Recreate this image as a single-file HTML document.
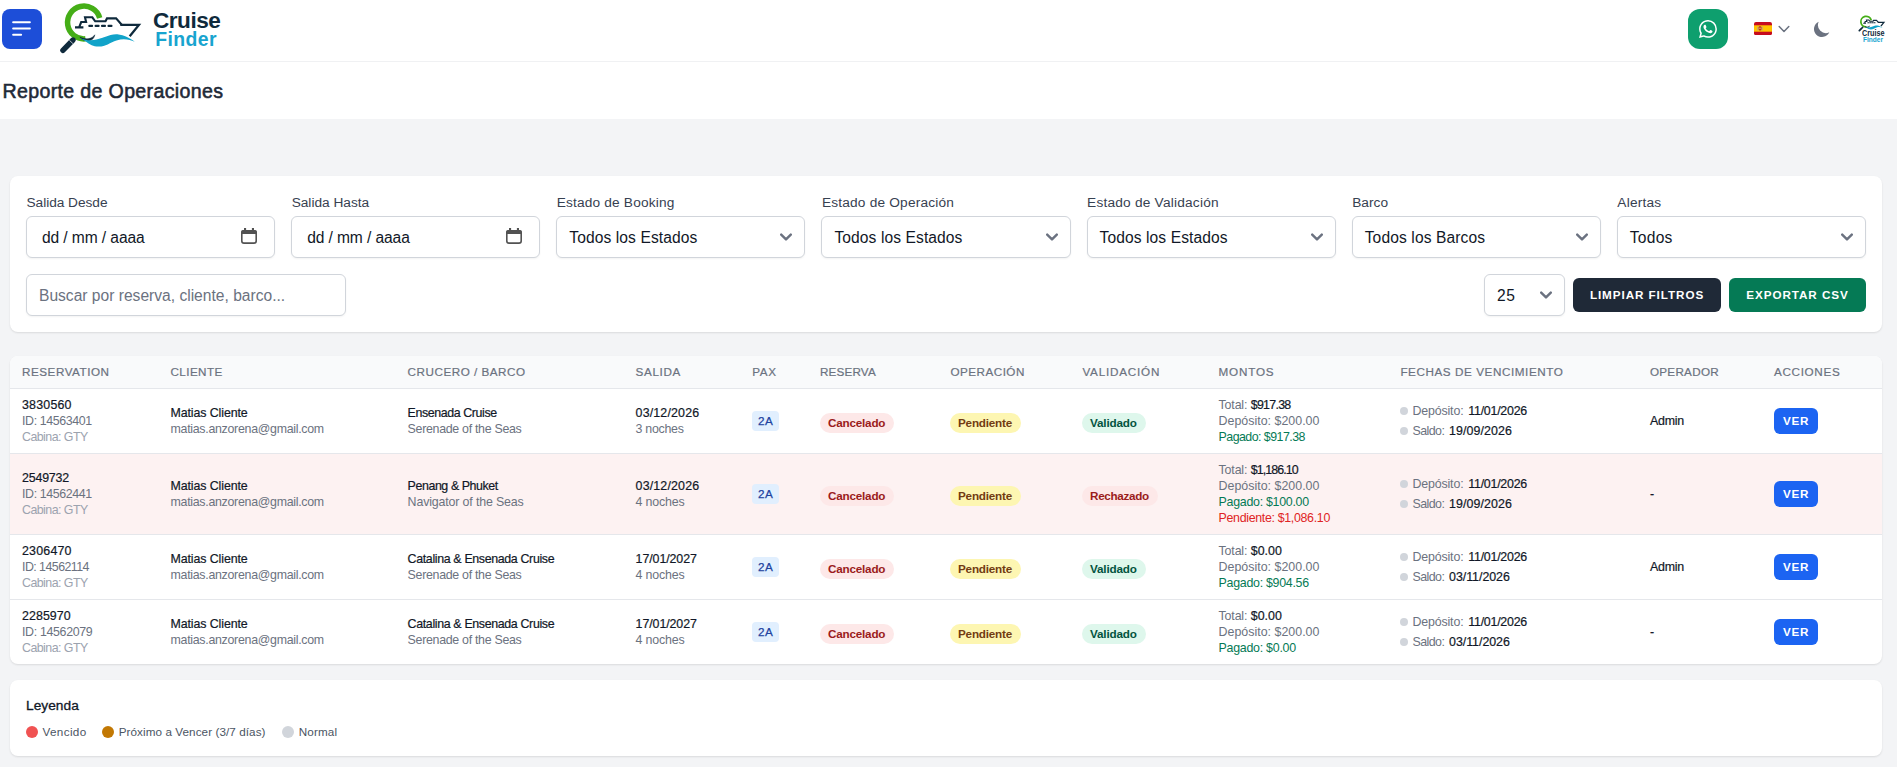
<!DOCTYPE html>
<html lang="es"><head><meta charset="utf-8"><title>Reporte de Operaciones</title>
<style>
*{box-sizing:border-box;margin:0;padding:0}
html,body{width:1897px;height:767px;overflow:hidden}
body{font-family:"Liberation Sans",sans-serif;background:#f3f4f6;color:#111827;position:relative;-webkit-font-smoothing:antialiased}
span{white-space:pre}
.top{position:absolute;left:0;top:0;width:1897px;height:62px;background:#fff;border-bottom:1px solid #f0f1f3}
.titlebar{position:absolute;left:0;top:62px;width:1897px;height:57px;background:#fff}
.titlebar h2{font-size:19.6px;position:absolute;left:2.5px;top:15px;line-height:28px;font-weight:400;color:#1f2937;-webkit-text-stroke:0.55px #1f2937}
.menu{position:absolute;left:2px;top:9px;width:40px;height:40px;border-radius:8px;background:#1d4ed8}
.menu svg{position:absolute;left:7px;top:7px}
.abs{position:absolute}
.wa{position:absolute;left:1688px;top:9px;width:40px;height:40px;border-radius:12px;background:#0e9f6e}
.wa svg{position:absolute;left:11px;top:11px}
.card{position:absolute;left:10px;width:1872px;background:#fff;border-radius:8px;box-shadow:0 1px 2px rgba(0,0,0,.07),0 1px 3px rgba(0,0,0,.04)}
.filters{top:176px;height:156px}
.fl{font-size:13.7px;position:absolute;top:17px;line-height:20px;color:#374151}
.fi{font-size:15.6px;position:absolute;height:42px;border:1px solid #d1d5db;border-radius:6px;background:#fff;box-shadow:0 1px 2px rgba(0,0,0,.05);line-height:40px;color:#111827}
.fi .tx{position:absolute;top:1px;left:12px}
.fi svg.chev{position:absolute;right:12px;top:16px}
.fi svg.cal{position:absolute;right:17px;top:11px}
.btn{font-size:11.7px;position:absolute;top:102px;height:34px;border-radius:6px;color:#fff;line-height:34px;text-align:center}
.tablecard{top:356px;height:308px;overflow:hidden}
table{border-collapse:separate;border-spacing:0;table-layout:fixed;width:1872px}
th{font-size:11.7px;height:33px;background:#f9fafb;border-bottom:1px solid #e5e7eb;text-align:left;padding:0 12px;color:#6b7280;font-weight:400;line-height:16px;vertical-align:middle}
td{font-size:12.4px;padding:0 12px;vertical-align:middle;border-bottom:1px solid #e5e7eb;line-height:16px}
tr:last-child td{border-bottom:0}
th:nth-child(2),td:nth-child(2){padding-left:12.5px}
th:nth-child(3),td:nth-child(3){padding-left:12.6px}
th:nth-child(4),td:nth-child(4){padding-left:12.6px}
th:nth-child(5){padding-left:12.3px}
th:nth-child(7){padding-left:12.4px}
th:nth-child(8){padding-left:12.4px}
th:nth-child(9),td:nth-child(9){padding-left:12.6px}
th:nth-child(10),td:nth-child(10){padding-left:12.4px}
th:nth-child(11),td:nth-child(11){padding-left:12.9px}

tr.r td{height:65px}
tr.r.last td{height:64px}
tr.r4 td{height:81px;background:#fdf2f2}
td div{height:16px;white-space:nowrap}
.m{color:#111827;-webkit-text-stroke:0.2px #111827}
.g5{color:#6b7280}
.g4{color:#9ca3af}
.gr{color:#057a55}
.rd{color:#e02424}
.pax{font-size:11.7px;display:inline-block;height:20px;line-height:20px;padding:0 6px;border-radius:4px;background:#e1effe;color:#1e429f;-webkit-text-stroke:0.25px #1e429f}
.bd{font-size:11.7px;display:inline-block;position:relative;top:2px;height:20px;line-height:20px;padding:0 0 0 8px;border-radius:10px;font-weight:700}
.b-red{background:#fde8e8;color:#9b1c1c}
.b-yel{background:#fdf6b2;color:#723b13}
.b-grn{background:#def7ec;color:#03543f}
.fe{display:flex;align-items:center;height:16px}
.fe+.fe{margin-top:4px}
.dot{display:inline-block;width:8px;height:8px;border-radius:50%;background:#d1d5db;margin-right:4px;flex:none}
.ver{font-size:11.7px;display:inline-block;width:44px;height:26px;line-height:26px;border-radius:6px;background:#1c64f2;color:#fff;font-weight:700;text-align:center}
.legend{top:680px;height:76px}
.legend .ttl{font-size:13.7px;position:absolute;left:16px;top:16px;line-height:20px;color:#111827;-webkit-text-stroke:0.3px #111827}
.legend .it{font-size:11.7px;position:absolute;top:44px;line-height:16px;color:#4b5563}
.legend .dt{position:absolute;top:46px;width:12px;height:12px;border-radius:50%}
</style></head><body>

<header class="top">
<div class="menu"><svg width="25" height="25" viewBox="0 0 24 24" fill="none" stroke="#fff" stroke-width="2" stroke-linecap="round"><path d="M4 6h16M4 12h16M4 18h7.600"/></svg></div>
<svg class="abs" style="left:55px;top:0" width="95" height="60" viewBox="55 0 95 60"><path d="M99.700 17.900A16.400 16.400 0 1 0 85.400 38.840" fill="none" stroke="#45ae17" stroke-width="5.500"/>
<path d="M73 40 62.9 50.3" stroke="#0f2a3c" stroke-width="5.4" stroke-linecap="round" fill="none"/>
<path d="M69.3 40.2 72.9 43.6" stroke="#fff" stroke-width=".7" fill="none"/>
<path d="M75 27.4h8.4M79.2 27.2l2-5.2h4.9l-1.100-4.700h7.300l2.900 4h10.300l1.500-2.900h9.100l5.600 6.300" fill="none" stroke="#0f2a3c" stroke-width="2.10" stroke-linejoin="miter"/>
<path d="M120.300 24.900h18.600L129.700 36.300" fill="none" stroke="#0f2a3c" stroke-width="2.30" stroke-linejoin="miter"/>
<path d="M89.300 25.900h2.800M95.600 25.900h3M102 25.900h3M108.500 25.900h3" stroke="#0f2a3c" stroke-width="2.10" stroke-linecap="round" fill="none"/>
<path d="M79.800 37.100c3.600 1.600 6.500 2 9.100 1.500 2.600-.5 4.600-1.800 5.900-3.800-.3 3-2.500 5.400-5.600 6.100-3.400.7-7-.9-9.400-3.800z" fill="#0f2a3c" stroke="#0f2a3c" stroke-width="0.50"/>
<path d="M79.900 37.900c4 1.700 7.400 2.500 10.900 2.400 3.800-.1 7.300-1 11-2.200 3-1 5.800-2.200 8.800-3 2.600-.7 5.300-.9 8-.6 2.700.3 5.100 1 7.300 2 3.500 1.500 6.400 3.300 8.800 5.300-3.300-1.500-6.700-2.500-10.900-2.500-2.300 0-4.800.4-7.300 1.100-3 .9-5.800 2.500-8.800 4-2.700 1.300-5.500 2-8.700 2.200-2.700.100-5.300-.4-7.300-1.400-2.300-1.100-4.200-2.400-5.900-3.800-2.100-1.100-3.900-2.200-5.900-3.500z" fill="#11a3c9"/></svg>
<div class="abs" style="left:153px;top:6.6px;font-size:22.6px;line-height:28px;color:#0f2a3c"><span style="font-size:22.6px;font-weight:700;letter-spacing:-0.506px;">Cruise</span></div>
<div class="abs" style="left:155.2px;top:27px;font-size:19.4px;line-height:24px;color:#18a4cf"><span style="font-size:19.4px;font-weight:700;letter-spacing:0.407px;">Finder</span></div>
<div class="wa"><svg width="18" height="18" viewBox="0 0 16 16" fill="#fff"><path d="M13.601 2.326A7.85 7.85 0 0 0 7.994 0C3.627 0 .068 3.558.064 7.926c0 1.399.366 2.76 1.057 3.965L0 16l4.204-1.102a7.9 7.9 0 0 0 3.79.965h.004c4.368 0 7.926-3.558 7.93-7.93A7.9 7.9 0 0 0 13.6 2.326zM7.994 14.521a6.6 6.6 0 0 1-3.356-.92l-.24-.144-2.494.654.666-2.433-.156-.251a6.56 6.56 0 0 1-1.007-3.505c0-3.626 2.957-6.584 6.591-6.584a6.56 6.56 0 0 1 4.66 1.931 6.56 6.56 0 0 1 1.928 4.66c-.004 3.639-2.961 6.592-6.592 6.592m3.615-4.934c-.197-.099-1.17-.578-1.353-.646-.182-.065-.315-.099-.445.099-.133.197-.513.646-.627.775-.114.133-.232.148-.43.05-.197-.1-.836-.308-1.592-.985-.59-.525-.985-1.175-1.103-1.372-.114-.198-.011-.304.088-.403.087-.088.197-.232.296-.346.1-.114.133-.198.198-.33.065-.134.034-.248-.015-.347-.05-.099-.445-1.076-.612-1.47-.16-.389-.323-.335-.445-.34-.114-.007-.247-.007-.38-.007a.73.73 0 0 0-.529.247c-.182.198-.691.677-.691 1.654s.71 1.916.81 2.049c.098.133 1.394 2.132 3.383 2.992.47.205.84.326 1.129.418.475.152.904.129 1.246.08.38-.058 1.171-.48 1.338-.943.164-.464.164-.86.114-.943-.049-.084-.182-.133-.38-.232"/></svg></div>
<svg class="abs" style="left:1754px;top:22px" width="18" height="13.2" viewBox="0 0 18 13.2"><defs><clipPath id="fc"><rect width="18" height="13.2" rx="2"/></clipPath></defs><g clip-path="url(#fc)"><rect width="18" height="13.2" fill="#c60b1e"/><rect y="3.3" width="18" height="6.4" fill="#ffc400"/><rect x="3.300" y="4.600" width="1.100" height="3.900" fill="#b8a08a"/><rect x="7.600" y="4.600" width="1.100" height="3.900" fill="#b8a08a"/><rect x="4.700" y="4.300" width="2.700" height="4.300" rx="1" fill="#ad1519" opacity=".85"/><rect x="5.300" y="5.600" width="1.400" height="1.500" fill="#e8c9a0" opacity=".8"/></g></svg>
<svg class="abs" style="left:1778px;top:25px" width="12" height="8" viewBox="0 0 12 8" fill="none" stroke="#6b7280" stroke-width="1.5" stroke-linecap="round" stroke-linejoin="round"><path d="M1.2 1.5 6 6.5l4.8-5"/></svg>
<svg class="abs" style="left:1812px;top:19px" width="20" height="20" viewBox="0 0 20 20" fill="#6b7280"><path d="M17.293 13.293A8 8 0 016.707 2.707a8.001 8.001 0 1010.586 10.586z"/></svg>
<svg class="abs" style="left:1856px;top:13px" width="32" height="19" viewBox="52.6 -4.300 99 58.8"><path d="M99.700 17.900A16.400 16.400 0 1 0 85.400 38.840" fill="none" stroke="#45ae17" stroke-width="5.500"/>
<path d="M73 40 62.9 50.3" stroke="#0f2a3c" stroke-width="5.4" stroke-linecap="round" fill="none"/>
<path d="M69.3 40.2 72.9 43.6" stroke="#fff" stroke-width=".7" fill="none"/>
<path d="M75 27.4h8.4M79.2 27.2l2-5.2h4.9l-1.100-4.700h7.300l2.900 4h10.300l1.500-2.900h9.100l5.600 6.300" fill="none" stroke="#0f2a3c" stroke-width="3.57" stroke-linejoin="miter"/>
<path d="M120.300 24.900h18.600L129.700 36.300" fill="none" stroke="#0f2a3c" stroke-width="3.91" stroke-linejoin="miter"/>
<path d="M89.300 25.900h2.800M95.600 25.900h3M102 25.900h3M108.500 25.900h3" stroke="#0f2a3c" stroke-width="3.57" stroke-linecap="round" fill="none"/>
<path d="M79.800 37.100c3.600 1.600 6.500 2 9.100 1.500 2.600-.5 4.600-1.800 5.900-3.800-.3 3-2.500 5.400-5.600 6.100-3.400.7-7-.9-9.400-3.800z" fill="#0f2a3c" stroke="#0f2a3c" stroke-width="0.85"/>
<path d="M79.900 37.900c4 1.700 7.400 2.500 10.900 2.400 3.800-.1 7.300-1 11-2.200 3-1 5.800-2.200 8.800-3 2.600-.7 5.300-.9 8-.6 2.700.3 5.100 1 7.300 2 3.500 1.500 6.400 3.300 8.800 5.300-3.300-1.500-6.700-2.500-10.900-2.500-2.300 0-4.800.4-7.300 1.100-3 .9-5.800 2.500-8.800 4-2.700 1.300-5.500 2-8.700 2.200-2.700.100-5.300-.4-7.300-1.400-2.300-1.100-4.200-2.400-5.900-3.800-2.100-1.100-3.900-2.200-5.900-3.500z" fill="#11a3c9"/></svg><div class="abs" style="left:1861.700px;top:28.900px;line-height:10px;font-size:8.200px;font-weight:700;color:#0f2a3c;transform:scaleX(.885);transform-origin:0 0">Cruise</div><div class="abs" style="left:1862.500px;top:35.200px;line-height:10px;font-size:6.800px;font-weight:700;color:#18a4cf;transform:scaleX(.96);transform-origin:0 0">Finder</div>
</header>
<div class="titlebar"><h2><span style="font-size:19.6px;letter-spacing:0.334px;">Reporte de Operaciones</span></h2></div>
<section class="card filters">
<label class="fl" style="left:16.50px"><span style="font-size:13.7px;letter-spacing:-0.038px;">Salida Desde</span></label>
<div class="fi" style="left:16.00px;top:40px;width:249.14px"><span class="tx" style="left:15px"><span style="font-size:15.6px;letter-spacing:-0.101px;">dd / mm / aaaa</span></span><svg class="cal" width="16" height="16" viewBox="0 0 16 16"><rect x=".8" y="2.800" width="14.400" height="12.300" rx="2.200" fill="none" stroke="#525252" stroke-width="1.600"/><path d="M0 5.900V4.300A2.300 2.300 0 0 1 2.300 2h11.400A2.300 2.300 0 0 1 16 4.300v1.600z" fill="#525252"/><rect x="3" y="0" width="2.100" height="3" fill="#525252"/><rect x="10.900" y="0" width="2.100" height="3" fill="#525252"/></svg></div>
<label class="fl" style="left:281.64px"><span style="font-size:13.7px;">Salida Hasta</span></label>
<div class="fi" style="left:281.14px;top:40px;width:249.14px"><span class="tx" style="left:15px"><span style="font-size:15.6px;letter-spacing:-0.101px;">dd / mm / aaaa</span></span><svg class="cal" width="16" height="16" viewBox="0 0 16 16"><rect x=".8" y="2.800" width="14.400" height="12.300" rx="2.200" fill="none" stroke="#525252" stroke-width="1.600"/><path d="M0 5.900V4.300A2.300 2.300 0 0 1 2.300 2h11.400A2.300 2.300 0 0 1 16 4.300v1.600z" fill="#525252"/><rect x="3" y="0" width="2.100" height="3" fill="#525252"/><rect x="10.900" y="0" width="2.100" height="3" fill="#525252"/></svg></div>
<label class="fl" style="left:546.79px"><span style="font-size:13.7px;letter-spacing:0.161px;">Estado de Booking</span></label>
<div class="fi" style="left:546.29px;top:40px;width:249.14px"><span class="tx" style="left:12px"><span style="font-size:15.6px;letter-spacing:0.090px;">Todos los Estados</span></span><svg class="chev" width="12" height="8" viewBox="0 0 10 6.67" fill="none" stroke="#6b7280" stroke-width="2" stroke-linecap="round" stroke-linejoin="round"><path d="m1 1.33 4 4 4-4"/></svg></div>
<label class="fl" style="left:811.93px"><span style="font-size:13.7px;letter-spacing:0.188px;">Estado de Operación</span></label>
<div class="fi" style="left:811.43px;top:40px;width:249.14px"><span class="tx" style="left:12px"><span style="font-size:15.6px;letter-spacing:0.090px;">Todos los Estados</span></span><svg class="chev" width="12" height="8" viewBox="0 0 10 6.67" fill="none" stroke="#6b7280" stroke-width="2" stroke-linecap="round" stroke-linejoin="round"><path d="m1 1.33 4 4 4-4"/></svg></div>
<label class="fl" style="left:1077.07px"><span style="font-size:13.7px;letter-spacing:0.206px;">Estado de Validación</span></label>
<div class="fi" style="left:1076.57px;top:40px;width:249.14px"><span class="tx" style="left:12px"><span style="font-size:15.6px;letter-spacing:0.090px;">Todos los Estados</span></span><svg class="chev" width="12" height="8" viewBox="0 0 10 6.67" fill="none" stroke="#6b7280" stroke-width="2" stroke-linecap="round" stroke-linejoin="round"><path d="m1 1.33 4 4 4-4"/></svg></div>
<label class="fl" style="left:1342.21px"><span style="font-size:13.7px;letter-spacing:0.009px;">Barco</span></label>
<div class="fi" style="left:1341.71px;top:40px;width:249.14px"><span class="tx" style="left:12px"><span style="font-size:15.6px;letter-spacing:0.110px;">Todos los Barcos</span></span><svg class="chev" width="12" height="8" viewBox="0 0 10 6.67" fill="none" stroke="#6b7280" stroke-width="2" stroke-linecap="round" stroke-linejoin="round"><path d="m1 1.33 4 4 4-4"/></svg></div>
<label class="fl" style="left:1607.36px"><span style="font-size:13.7px;letter-spacing:0.182px;">Alertas</span></label>
<div class="fi" style="left:1606.86px;top:40px;width:249.14px"><span class="tx" style="left:12px"><span style="font-size:15.6px;letter-spacing:0.219px;">Todos</span></span><svg class="chev" width="12" height="8" viewBox="0 0 10 6.67" fill="none" stroke="#6b7280" stroke-width="2" stroke-linecap="round" stroke-linejoin="round"><path d="m1 1.33 4 4 4-4"/></svg></div>
<div class="fi" style="left:16px;top:98px;width:320px"><span class="tx" style="color:#6b7280"><span style="font-size:15.6px;">Buscar por reserva, cliente, barco...</span></span></div>
<div class="fi" style="left:1474px;top:98px;width:81px"><span class="tx"><span style="font-size:15.6px;letter-spacing:0.641px;">25</span></span><svg class="chev" width="12" height="8" viewBox="0 0 10 6.67" fill="none" stroke="#6b7280" stroke-width="2" stroke-linecap="round" stroke-linejoin="round"><path d="m1 1.33 4 4 4-4"/></svg></div>
<div class="btn" style="left:1563px;width:148px;background:#1f2937"><span style="font-size:11.7px;font-weight:700;letter-spacing:0.920px;">LIMPIAR FILTROS</span></div>
<div class="btn" style="left:1719px;width:137px;background:#057a55"><span style="font-size:11.7px;font-weight:700;letter-spacing:0.922px;">EXPORTAR CSV</span></div>
</section>
<section class="card tablecard"><table><colgroup>
<col style="width:148px">
<col style="width:237px">
<col style="width:228px">
<col style="width:117px">
<col style="width:68px">
<col style="width:130px">
<col style="width:132px">
<col style="width:136px">
<col style="width:182px">
<col style="width:249px">
<col style="width:125px">
<col style="width:120px">
</colgroup><thead><tr>
<th><span style="font-size:11.7px;letter-spacing:0.517px;-webkit-text-stroke:0.2px #6b7280">RESERVATION</span></th>
<th><span style="font-size:11.7px;letter-spacing:0.407px;-webkit-text-stroke:0.2px #6b7280">CLIENTE</span></th>
<th><span style="font-size:11.7px;letter-spacing:0.507px;-webkit-text-stroke:0.2px #6b7280">CRUCERO / BARCO</span></th>
<th><span style="font-size:11.7px;letter-spacing:0.644px;-webkit-text-stroke:0.2px #6b7280">SALIDA</span></th>
<th><span style="font-size:11.7px;letter-spacing:0.584px;-webkit-text-stroke:0.2px #6b7280">PAX</span></th>
<th><span style="font-size:11.7px;letter-spacing:0.153px;-webkit-text-stroke:0.2px #6b7280">RESERVA</span></th>
<th><span style="font-size:11.7px;letter-spacing:0.482px;-webkit-text-stroke:0.2px #6b7280">OPERACIÓN</span></th>
<th><span style="font-size:11.7px;letter-spacing:0.785px;-webkit-text-stroke:0.2px #6b7280">VALIDACIÓN</span></th>
<th><span style="font-size:11.7px;letter-spacing:0.781px;-webkit-text-stroke:0.2px #6b7280">MONTOS</span></th>
<th><span style="font-size:11.7px;letter-spacing:0.570px;-webkit-text-stroke:0.2px #6b7280">FECHAS DE VENCIMIENTO</span></th>
<th><span style="font-size:11.7px;letter-spacing:0.273px;-webkit-text-stroke:0.2px #6b7280">OPERADOR</span></th>
<th><span style="font-size:11.7px;letter-spacing:0.665px;-webkit-text-stroke:0.2px #6b7280">ACCIONES</span></th>
</tr></thead><tbody>
<tr class="r">
<td><div><span class="m" style="font-size:12.4px;letter-spacing:0.208px;">3830560</span></div><div><span class="g5" style="font-size:12.4px;letter-spacing:-0.382px;">ID: 14563401</span></div><div><span class="g4" style="font-size:12.4px;letter-spacing:-0.542px;">Cabina: GTY</span></div></td>
<td><div><span class="m" style="font-size:12.4px;letter-spacing:-0.101px;">Matias Cliente</span></div><div><span class="g5" style="font-size:12.4px;letter-spacing:-0.290px;">matias.anzorena@gmail.com</span></div></td>
<td><div><span class="m" style="font-size:12.4px;letter-spacing:-0.397px;">Ensenada Cruise</span></div><div><span class="g5" style="font-size:12.4px;letter-spacing:-0.299px;">Serenade of the Seas</span></div></td>
<td><div><span class="m" style="font-size:12.4px;letter-spacing:0.165px;">03/12/2026</span></div><div><span class="g5" style="font-size:12.4px;letter-spacing:-0.285px;">3 noches</span></div></td>
<td><span class="pax"><span style="font-size:11.7px;letter-spacing:0.403px;">2A</span></span></td>
<td><span class="bd b-red" style="width:73.7px"><span style="font-size:11.7px;font-weight:700;letter-spacing:-0.201px;">Cancelado</span></span></td>
<td><span class="bd b-yel" style="width:71px"><span style="font-size:11.7px;font-weight:700;letter-spacing:-0.207px;">Pendiente</span></span></td>
<td><span class="bd b-grn" style="width:63.6px"><span style="font-size:11.7px;font-weight:700;letter-spacing:-0.152px;">Validado</span></span></td>
<td><div><span class="g5" style="font-size:12.4px;letter-spacing:-0.165px;">Total:</span><span style="display:inline-block;width:3.5px"></span><span class="m" style="font-size:12.4px;letter-spacing:-0.716px;">$917.38</span></div><div><span class="g5" style="font-size:12.4px;letter-spacing:0.014px;">Depósito: $200.00</span></div><div><span class="gr" style="font-size:12.4px;letter-spacing:-0.543px;">Pagado: $917.38</span></div></td>
<td><div class="fe"><i class="dot"></i><span class="g5" style="font-size:12.4px;letter-spacing:-0.145px;">Depósito:</span><span style="display:inline-block;width:4.8px"></span><span class="m" style="font-size:12.4px;letter-spacing:-0.233px;">11/01/2026</span></div><div class="fe"><i class="dot"></i><span class="g5" style="font-size:12.4px;letter-spacing:-0.528px;">Saldo:</span><span style="display:inline-block;width:4.7px"></span><span class="m" style="font-size:12.4px;letter-spacing:0.087px;">19/09/2026</span></div></td>
<td><span class="m" style="font-size:12.4px;letter-spacing:-0.206px;">Admin</span></td>
<td><span class="ver"><span style="font-size:11.7px;font-weight:700;letter-spacing:0.627px;">VER</span></span></td>
</tr>
<tr class="r4">
<td><div><span class="m" style="font-size:12.4px;letter-spacing:-0.175px;">2549732</span></div><div><span class="g5" style="font-size:12.4px;letter-spacing:-0.382px;">ID: 14562441</span></div><div><span class="g4" style="font-size:12.4px;letter-spacing:-0.542px;">Cabina: GTY</span></div></td>
<td><div><span class="m" style="font-size:12.4px;letter-spacing:-0.101px;">Matias Cliente</span></div><div><span class="g5" style="font-size:12.4px;letter-spacing:-0.290px;">matias.anzorena@gmail.com</span></div></td>
<td><div><span class="m" style="font-size:12.4px;letter-spacing:-0.411px;">Penang &amp; Phuket</span></div><div><span class="g5" style="font-size:12.4px;letter-spacing:-0.149px;">Navigator of the Seas</span></div></td>
<td><div><span class="m" style="font-size:12.4px;letter-spacing:0.165px;">03/12/2026</span></div><div><span class="g5" style="font-size:12.4px;letter-spacing:-0.157px;">4 noches</span></div></td>
<td><span class="pax"><span style="font-size:11.7px;letter-spacing:0.403px;">2A</span></span></td>
<td><span class="bd b-red" style="width:73.7px"><span style="font-size:11.7px;font-weight:700;letter-spacing:-0.201px;">Cancelado</span></span></td>
<td><span class="bd b-yel" style="width:71px"><span style="font-size:11.7px;font-weight:700;letter-spacing:-0.207px;">Pendiente</span></span></td>
<td><span class="bd b-red" style="width:75.8px"><span style="font-size:11.7px;font-weight:700;letter-spacing:-0.313px;">Rechazado</span></span></td>
<td><div><span class="g5" style="font-size:12.4px;letter-spacing:-0.165px;">Total:</span><span style="display:inline-block;width:3.5px"></span><span class="m" style="font-size:12.4px;letter-spacing:-0.903px;">$1,186.10</span></div><div><span class="g5" style="font-size:12.4px;letter-spacing:0.014px;">Depósito: $200.00</span></div><div><span class="gr" style="font-size:12.4px;letter-spacing:-0.279px;">Pagado: $100.00</span></div><div><span class="rd" style="font-size:12.4px;letter-spacing:-0.323px;">Pendiente: $1,086.10</span></div></td>
<td><div class="fe"><i class="dot"></i><span class="g5" style="font-size:12.4px;letter-spacing:-0.145px;">Depósito:</span><span style="display:inline-block;width:4.8px"></span><span class="m" style="font-size:12.4px;letter-spacing:-0.233px;">11/01/2026</span></div><div class="fe"><i class="dot"></i><span class="g5" style="font-size:12.4px;letter-spacing:-0.528px;">Saldo:</span><span style="display:inline-block;width:4.7px"></span><span class="m" style="font-size:12.4px;letter-spacing:0.087px;">19/09/2026</span></div></td>
<td><span class="m" style="font-size:12.4px;">-</span></td>
<td><span class="ver"><span style="font-size:11.7px;font-weight:700;letter-spacing:0.627px;">VER</span></span></td>
</tr>
<tr class="r">
<td><div><span class="m" style="font-size:12.4px;letter-spacing:0.208px;">2306470</span></div><div><span class="g5" style="font-size:12.4px;letter-spacing:-0.544px;">ID: 14562114</span></div><div><span class="g4" style="font-size:12.4px;letter-spacing:-0.542px;">Cabina: GTY</span></div></td>
<td><div><span class="m" style="font-size:12.4px;letter-spacing:-0.101px;">Matias Cliente</span></div><div><span class="g5" style="font-size:12.4px;letter-spacing:-0.290px;">matias.anzorena@gmail.com</span></div></td>
<td><div><span class="m" style="font-size:12.4px;letter-spacing:-0.347px;">Catalina &amp; Ensenada Cruise</span></div><div><span class="g5" style="font-size:12.4px;letter-spacing:-0.299px;">Serenade of the Seas</span></div></td>
<td><div><span class="m" style="font-size:12.4px;letter-spacing:-0.080px;">17/01/2027</span></div><div><span class="g5" style="font-size:12.4px;letter-spacing:-0.157px;">4 noches</span></div></td>
<td><span class="pax"><span style="font-size:11.7px;letter-spacing:0.403px;">2A</span></span></td>
<td><span class="bd b-red" style="width:73.7px"><span style="font-size:11.7px;font-weight:700;letter-spacing:-0.201px;">Cancelado</span></span></td>
<td><span class="bd b-yel" style="width:71px"><span style="font-size:11.7px;font-weight:700;letter-spacing:-0.207px;">Pendiente</span></span></td>
<td><span class="bd b-grn" style="width:63.6px"><span style="font-size:11.7px;font-weight:700;letter-spacing:-0.152px;">Validado</span></span></td>
<td><div><span class="g5" style="font-size:12.4px;letter-spacing:-0.165px;">Total:</span><span style="display:inline-block;width:3.5px"></span><span class="m" style="font-size:12.4px;letter-spacing:0.046px;">$0.00</span></div><div><span class="g5" style="font-size:12.4px;letter-spacing:0.014px;">Depósito: $200.00</span></div><div><span class="gr" style="font-size:12.4px;letter-spacing:-0.279px;">Pagado: $904.56</span></div></td>
<td><div class="fe"><i class="dot"></i><span class="g5" style="font-size:12.4px;letter-spacing:-0.145px;">Depósito:</span><span style="display:inline-block;width:4.8px"></span><span class="m" style="font-size:12.4px;letter-spacing:-0.233px;">11/01/2026</span></div><div class="fe"><i class="dot"></i><span class="g5" style="font-size:12.4px;letter-spacing:-0.528px;">Saldo:</span><span style="display:inline-block;width:4.7px"></span><span class="m" style="font-size:12.4px;letter-spacing:-0.033px;">03/11/2026</span></div></td>
<td><span class="m" style="font-size:12.4px;letter-spacing:-0.206px;">Admin</span></td>
<td><span class="ver"><span style="font-size:11.7px;font-weight:700;letter-spacing:0.627px;">VER</span></span></td>
</tr>
<tr class="r last">
<td><div><span class="m" style="font-size:12.4px;letter-spacing:0.075px;">2285970</span></div><div><span class="g5" style="font-size:12.4px;letter-spacing:-0.337px;">ID: 14562079</span></div><div><span class="g4" style="font-size:12.4px;letter-spacing:-0.542px;">Cabina: GTY</span></div></td>
<td><div><span class="m" style="font-size:12.4px;letter-spacing:-0.101px;">Matias Cliente</span></div><div><span class="g5" style="font-size:12.4px;letter-spacing:-0.290px;">matias.anzorena@gmail.com</span></div></td>
<td><div><span class="m" style="font-size:12.4px;letter-spacing:-0.347px;">Catalina &amp; Ensenada Cruise</span></div><div><span class="g5" style="font-size:12.4px;letter-spacing:-0.299px;">Serenade of the Seas</span></div></td>
<td><div><span class="m" style="font-size:12.4px;letter-spacing:-0.080px;">17/01/2027</span></div><div><span class="g5" style="font-size:12.4px;letter-spacing:-0.157px;">4 noches</span></div></td>
<td><span class="pax"><span style="font-size:11.7px;letter-spacing:0.403px;">2A</span></span></td>
<td><span class="bd b-red" style="width:73.7px"><span style="font-size:11.7px;font-weight:700;letter-spacing:-0.201px;">Cancelado</span></span></td>
<td><span class="bd b-yel" style="width:71px"><span style="font-size:11.7px;font-weight:700;letter-spacing:-0.207px;">Pendiente</span></span></td>
<td><span class="bd b-grn" style="width:63.6px"><span style="font-size:11.7px;font-weight:700;letter-spacing:-0.152px;">Validado</span></span></td>
<td><div><span class="g5" style="font-size:12.4px;letter-spacing:-0.165px;">Total:</span><span style="display:inline-block;width:3.5px"></span><span class="m" style="font-size:12.4px;letter-spacing:0.046px;">$0.00</span></div><div><span class="g5" style="font-size:12.4px;letter-spacing:0.014px;">Depósito: $200.00</span></div><div><span class="gr" style="font-size:12.4px;letter-spacing:-0.260px;">Pagado: $0.00</span></div></td>
<td><div class="fe"><i class="dot"></i><span class="g5" style="font-size:12.4px;letter-spacing:-0.145px;">Depósito:</span><span style="display:inline-block;width:4.8px"></span><span class="m" style="font-size:12.4px;letter-spacing:-0.233px;">11/01/2026</span></div><div class="fe"><i class="dot"></i><span class="g5" style="font-size:12.4px;letter-spacing:-0.528px;">Saldo:</span><span style="display:inline-block;width:4.7px"></span><span class="m" style="font-size:12.4px;letter-spacing:-0.033px;">03/11/2026</span></div></td>
<td><span class="m" style="font-size:12.4px;">-</span></td>
<td><span class="ver"><span style="font-size:11.7px;font-weight:700;letter-spacing:0.627px;">VER</span></span></td>
</tr>
</tbody></table></section>
<section class="card legend"><div class="ttl"><span style="font-size:13.7px;letter-spacing:0.045px;">Leyenda</span></div>
<i class="dt" style="left:16px;background:#f05252"></i><span class="it" style="left:32.5px"><span style="font-size:11.7px;letter-spacing:0.351px;">Vencido</span></span>
<i class="dt" style="left:92px;background:#c27803"></i><span class="it" style="left:108.7px"><span style="font-size:11.7px;letter-spacing:0.074px;">Próximo a Vencer (3/7 días)</span></span>
<i class="dt" style="left:272px;background:#d1d5db"></i><span class="it" style="left:288.7px"><span style="font-size:11.7px;letter-spacing:0.126px;">Normal</span></span>
</section>
</body></html>
